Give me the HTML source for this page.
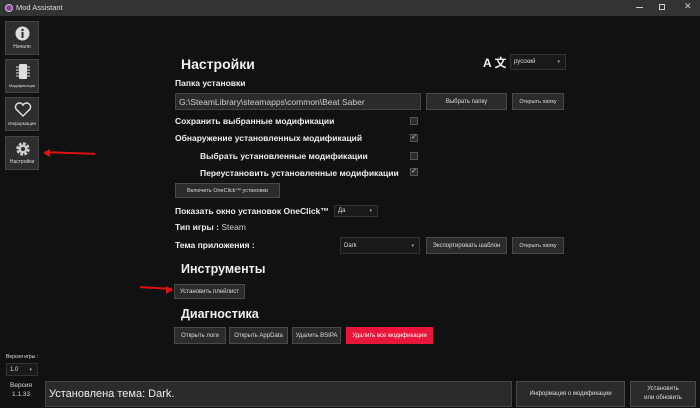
<!DOCTYPE html>
<html><head><meta charset="utf-8"><style>
*{box-sizing:border-box;margin:0;padding:0}
body{width:700px;height:408px;background:#111;font-family:"Liberation Sans","DejaVu Sans",sans-serif;color:#eee;position:relative;overflow:hidden}
.a{position:absolute}
.tb{left:0;top:0;width:700px;height:16px;background:#333;font-size:8px;color:#ddd}
.nav{width:34px;height:34px;background:#2e2e2e;border:1px solid #444;font-size:5px;color:#ddd;text-align:center}
.nav span{position:absolute;left:0;right:0;bottom:4px}
.lbl{font-size:8.5px;font-weight:bold;color:#eee;white-space:nowrap}
.btn{background:#2b2b2b;border:1px solid #4a4a4a;font-size:6px;color:#ddd;display:flex;align-items:center;justify-content:center;white-space:nowrap}
.cb{width:8px;height:8px;background:#2b2b2b;border:1px solid #555;font-size:7px;line-height:6px;text-align:center;color:#ddd}
.h{font-size:14px;font-weight:bold;color:#eee}
.dd{background:#1a1a1a;border:1px solid #333;font-size:6px;color:#ddd;padding-left:3px;display:flex;align-items:center}
.dd:after{content:"▾";position:absolute;right:5px;font-size:5px;color:#aaa}
</style></head><body>
<div class="a tb"><div class="a" style="left:5px;top:4px;width:8px;height:8px;border-radius:50%;background:#8a3fa0;border:1px solid #ccc"></div><div class="a" style="left:16px;top:3px;font-size:7.5px">Mod Assistant</div>
<div class="a" style="left:636px;top:7px;width:7px;height:1px;background:#ccc"></div>
<div class="a" style="left:659px;top:4px;width:6px;height:6px;border:1px solid #ccc"></div>
<div class="a" style="left:684px;top:1px;font-size:9px;color:#ccc">✕</div></div>

<div class="a nav" style="left:5px;top:21px"><svg class="a" style="left:9px;top:4px" width="15" height="15"><circle cx="7.5" cy="7.5" r="7" fill="#ddd"/><rect x="6.5" y="6" width="2" height="6" fill="#2e2e2e"/><circle cx="7.5" cy="4" r="1.2" fill="#2e2e2e"/></svg><span>Начало</span></div>
<div class="a nav" style="left:5px;top:59px"><svg class="a" style="left:10px;top:3px" width="14" height="17"><rect x="3" y="1" width="8" height="15" rx="1" fill="#ddd"/><g stroke="#ddd"><line x1="0" y1="4" x2="14" y2="4"/><line x1="0" y1="7" x2="14" y2="7"/><line x1="0" y1="10" x2="14" y2="10"/><line x1="0" y1="13" x2="14" y2="13"/></g></svg><span style="font-size:4px">Модификации</span></div>
<div class="a nav" style="left:5px;top:97px"><svg class="a" style="left:8px;top:4px" width="18" height="16"><path d="M9 14 L2 7 A3.5 3.5 0 0 1 9 3 A3.5 3.5 0 0 1 16 7 Z" fill="none" stroke="#ddd" stroke-width="1.5"/></svg><span style="font-size:4.5px">Информация</span></div>
<div class="a nav" style="left:5px;top:136px"><svg class="a" style="left:9px;top:4px" width="16" height="16"><circle cx="8" cy="8" r="5" fill="none" stroke="#ccc" stroke-width="3.5" stroke-dasharray="2.6 1.3"/><circle cx="8" cy="8" r="4.5" fill="#ccc"/><circle cx="8" cy="8" r="2" fill="#2e2e2e"/></svg><span>Настройки</span></div>

<div class="a" style="left:45px;top:152px;width:50px;height:2px;background:#e01010;transform:rotate(2deg)"></div>
<div class="a" style="left:43px;top:149px;border-right:7px solid #e01010;border-top:4px solid transparent;border-bottom:4px solid transparent;width:0;height:0"></div>
<div class="a" style="left:140px;top:287px;width:32px;height:2px;background:#e01010;transform:rotate(3deg)"></div>
<div class="a" style="left:166px;top:286px;border-left:7px solid #e01010;border-top:4px solid transparent;border-bottom:4px solid transparent;width:0;height:0"></div>

<div class="a h" style="left:181px;top:56px">Настройки</div>
<div class="a" style="left:483px;top:54px;font-size:12px;font-weight:bold;font-family:'Liberation Sans','Noto Sans CJK SC',sans-serif">A 文</div>
<div class="a dd" style="left:510px;top:54px;width:56px;height:16px">русский</div>
<div class="a lbl" style="left:175px;top:78px">Папка установки</div>
<div class="a" style="left:175px;top:93px;width:246px;height:17px;background:#2b2b2b;border:1px solid #444;font-size:8.5px;color:#ccc;padding:3px 3px">G:\SteamLibrary\steamapps\common\Beat Saber</div>
<div class="a btn" style="left:426px;top:93px;width:81px;height:17px">Выбрать папку</div>
<div class="a btn" style="left:512px;top:93px;width:52px;height:17px;font-size:5.5px">Открыть папку</div>
<div class="a lbl" style="left:175px;top:116px">Сохранить выбранные модификации</div><div class="a cb" style="left:410px;top:117px"></div>
<div class="a lbl" style="left:175px;top:133px">Обнаружение установленных модификаций</div><div class="a cb" style="left:410px;top:134px">✓</div>
<div class="a lbl" style="left:200px;top:151px">Выбрать установленные модификации</div><div class="a cb" style="left:410px;top:152px"></div>
<div class="a lbl" style="left:200px;top:168px">Переустановить установленные модификации</div><div class="a cb" style="left:410px;top:168px">✓</div>
<div class="a btn" style="left:175px;top:183px;width:105px;height:15px;font-size:5.5px">Включить OneClick™ установки</div>
<div class="a lbl" style="left:175px;top:206px">Показать окно установок OneClick™</div>
<div class="a dd" style="left:334px;top:205px;width:44px;height:12px">Да</div>
<div class="a lbl" style="left:175px;top:222px">Тип игры : <span style="font-weight:normal;color:#ccc">Steam</span></div>
<div class="a lbl" style="left:175px;top:240px">Тема приложения :</div>
<div class="a dd" style="left:340px;top:237px;width:80px;height:17px">Dark</div>
<div class="a btn" style="left:426px;top:237px;width:81px;height:17px">Экспортировать шаблон</div>
<div class="a btn" style="left:512px;top:237px;width:52px;height:17px;font-size:5.5px">Открыть папку</div>
<div class="a h" style="left:181px;top:262px;font-size:12.5px">Инструменты</div>
<div class="a btn" style="left:174px;top:284px;width:71px;height:15px">Установить плейлист</div>
<div class="a h" style="left:181px;top:307px;font-size:12.5px">Диагностика</div>
<div class="a btn" style="left:174px;top:327px;width:52px;height:17px">Открыть логи</div>
<div class="a btn" style="left:229px;top:327px;width:59px;height:17px">Открыть AppData</div>
<div class="a btn" style="left:292px;top:327px;width:49px;height:17px">Удалить BSIPA</div>
<div class="a btn" style="left:346px;top:327px;width:87px;height:17px;background:#e8163a;border-color:#e8163a;color:#fff">Удалить все модификации</div>
<div class="a" style="left:6px;top:354px;font-size:5px;color:#ddd">Версия игры :</div>
<div class="a dd" style="left:6px;top:363px;width:32px;height:13px">1.0</div>
<div class="a" style="left:10px;top:381px;font-size:6.5px;color:#ddd;text-align:center;line-height:9px">Версия<br>1.1.33</div>
<div class="a" style="left:45px;top:381px;width:467px;height:26px;background:#2b2b2b;border:1px solid #444;font-size:11px;color:#eee;padding:6px 3px">Установлена тема: Dark.</div>
<div class="a btn" style="left:516px;top:381px;width:109px;height:26px">Информация о модификации</div>
<div class="a btn" style="left:630px;top:381px;width:66px;height:26px;text-align:center;line-height:9px">Установить<br>или обновить</div>
</body></html>
